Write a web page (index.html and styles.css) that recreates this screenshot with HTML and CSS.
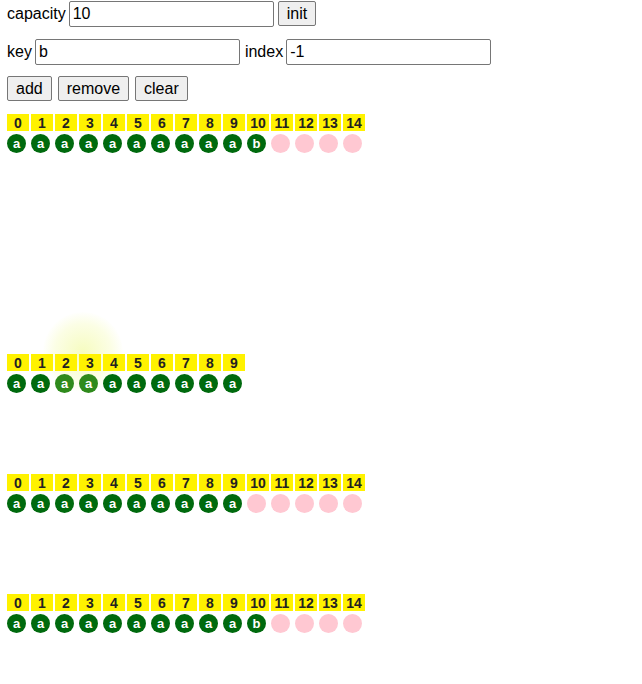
FILE: index.html
```html
<!DOCTYPE html>
<html>
<head>
<meta charset="utf-8">
<link rel="stylesheet" href="styles.css">
</head>
<body>
<div class="controls">
  <div class="row r1"><span>capacity</span><input class="field" value="10"><button>init</button></div>
  <div class="row r2"><span>key</span><input class="field" value="b"><span>index</span><input class="field" value="-1"></div>
  <div class="row btns"><button>add</button><button>remove</button><button>clear</button></div>
</div>

<div class="array first">
  <div class="idx">0</div><div class="idx">1</div><div class="idx">2</div><div class="idx">3</div><div class="idx">4</div><div class="idx">5</div><div class="idx">6</div><div class="idx">7</div><div class="idx">8</div><div class="idx">9</div><div class="idx">10</div><div class="idx">11</div><div class="idx">12</div><div class="idx">13</div><div class="idx">14</div>
  <div class="dot">a</div><div class="dot">a</div><div class="dot">a</div><div class="dot">a</div><div class="dot">a</div><div class="dot">a</div><div class="dot">a</div><div class="dot">a</div><div class="dot">a</div><div class="dot">a</div><div class="dot">b</div><div class="dot empty"></div><div class="dot empty"></div><div class="dot empty"></div><div class="dot empty"></div>
</div>

<div class="array second">
  <div class="glow"></div>
  <div class="idx">0</div><div class="idx">1</div><div class="idx">2</div><div class="idx">3</div><div class="idx">4</div><div class="idx">5</div><div class="idx">6</div><div class="idx">7</div><div class="idx">8</div><div class="idx">9</div><div class="idx hidden"></div><div class="idx hidden"></div><div class="idx hidden"></div><div class="idx hidden"></div><div class="idx hidden"></div>
  <div class="dot">a</div><div class="dot">a</div><div class="dot lit">a</div><div class="dot lit">a</div><div class="dot">a</div><div class="dot">a</div><div class="dot">a</div><div class="dot">a</div><div class="dot">a</div><div class="dot">a</div>
</div>

<div class="array third">
  <div class="idx">0</div><div class="idx">1</div><div class="idx">2</div><div class="idx">3</div><div class="idx">4</div><div class="idx">5</div><div class="idx">6</div><div class="idx">7</div><div class="idx">8</div><div class="idx">9</div><div class="idx">10</div><div class="idx">11</div><div class="idx">12</div><div class="idx">13</div><div class="idx">14</div>
  <div class="dot">a</div><div class="dot">a</div><div class="dot">a</div><div class="dot">a</div><div class="dot">a</div><div class="dot">a</div><div class="dot">a</div><div class="dot">a</div><div class="dot">a</div><div class="dot">a</div><div class="dot empty"></div><div class="dot empty"></div><div class="dot empty"></div><div class="dot empty"></div><div class="dot empty"></div>
</div>

<div class="array third">
  <div class="idx">0</div><div class="idx">1</div><div class="idx">2</div><div class="idx">3</div><div class="idx">4</div><div class="idx">5</div><div class="idx">6</div><div class="idx">7</div><div class="idx">8</div><div class="idx">9</div><div class="idx">10</div><div class="idx">11</div><div class="idx">12</div><div class="idx">13</div><div class="idx">14</div>
  <div class="dot">a</div><div class="dot">a</div><div class="dot">a</div><div class="dot">a</div><div class="dot">a</div><div class="dot">a</div><div class="dot">a</div><div class="dot">a</div><div class="dot">a</div><div class="dot">a</div><div class="dot">b</div><div class="dot empty"></div><div class="dot empty"></div><div class="dot empty"></div><div class="dot empty"></div>
</div>
</body>
</html>
```

FILE: styles.css
```css
html, body {
  background: #ffffff;
}
body {
  margin: 0 0 0 7px;
  padding-top: 1px;
  font-family: "Liberation Sans", Arial, sans-serif;
  font-size: 16px;
  color: #000;
}
.controls {
  display: flex;
  flex-direction: column;
}
.row {
  display: flex;
  align-items: center;
  gap: 3px;
  height: 25px;
}
.r2 {
  margin-top: 13px;
}
.r2 .field + span {
  margin-left: 2px;
}
.btns {
  gap: 5px;
  margin-top: 12px;
}
.field {
  box-sizing: border-box;
  width: 205px;
  height: 26px;
  margin: 0;
  padding: 1px 3px;
  border: 1px solid #767676;
  border-radius: 2px;
  font-family: "Liberation Sans", Arial, sans-serif;
  font-size: 16px;
  color: #000;
}
.r1 button {
  margin-left: 1px;
}
button {
  box-sizing: border-box;
  height: 25px;
  margin: 0;
  padding: 0 8px;
  background: #efefef;
  border: 1px solid #767676;
  border-radius: 2px;
  font-family: "Liberation Sans", Arial, sans-serif;
  font-size: 16px;
  color: #000;
}
.btns button + button {
  margin-left: 1px;
}
.array {
  display: grid;
  grid-template-columns: repeat(15, 22px);
  grid-template-rows: 17px 19px;
  column-gap: 2px;
  row-gap: 3px;
  position: relative;
  z-index: 0;
}
.first {
  margin-top: 13px;
}
.second {
  margin-top: 201px;
}
.third {
  margin-top: 81px;
}
.idx {
  background: #fff200;
  font-weight: bold;
  font-size: 14px;
  color: #222;
  text-align: center;
  line-height: 18px;
}
.idx.hidden {
  background: transparent;
}
.dot {
  width: 19px;
  height: 19px;
  border-radius: 50%;
  background: #006a0e;
  color: #fff;
  font-weight: bold;
  font-size: 13px;
  line-height: 19px;
  text-align: center;
}
.dot.lit {
  background: #2f8a1c;
}
.dot.empty {
  background: #ffc8d2;
}
.glow {
  position: absolute;
  z-index: -1;
  left: 36px;
  top: -42px;
  width: 80px;
  height: 80px;
  border-radius: 50%;
  background: radial-gradient(circle, rgba(240, 250, 150, 0.6) 0%, rgba(245, 252, 180, 0.35) 50%, rgba(255, 255, 255, 0) 72%);
  pointer-events: none;
}
```
